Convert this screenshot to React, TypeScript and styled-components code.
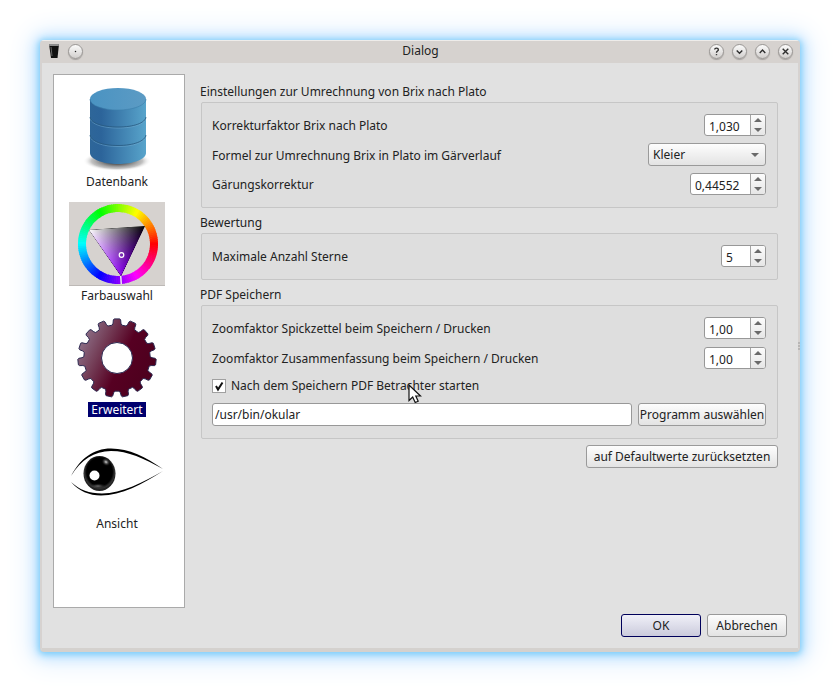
import React, { useState } from "react";
import styled, { createGlobalStyle, css } from "styled-components";

const GlobalStyle = createGlobalStyle`
  * { box-sizing: border-box; }
  body { margin: 0; background: #fff; }
  body, button, input, select {
    font-family: "Noto Sans", "Open Sans", sans-serif;
    font-size: 12px;
    color: #222;
  }
`;

const Page = styled.main`
  min-height: 100vh;
  padding: 40px;
  display: flex;
`;

const Window = styled.section`
  position: relative;
  flex: 1;
  display: flex;
  flex-direction: column;
  background: #e1e1e1;
  border: 2px solid #d6d2d0;
  border-top: 1px solid #eeecea;
  border-bottom: 4px solid #d4d1ce;
  border-radius: 4px;
  box-shadow: 0 1px 6px 1px #7accfa, 0 1px 14px 3px #b0dffd, 0 1px 28px 8px #dcecff;
`;

const TitleBar = styled.header`
  display: grid;
  grid-template-columns: 1fr auto 1fr;
  align-items: center;
  height: 22px;
  padding: 0 5px 2px 6px;
  background: #d6d2cf;
`;

const TitleSide = styled.div<{ $end?: boolean }>`
  display: flex;
  align-items: center;
  gap: 8px;
  justify-content: ${(p) => (p.$end ? "flex-end" : "flex-start")};
`;

const Title = styled.h1`
  margin: 0;
  font-size: 12px;
  font-weight: 400;
  line-height: 20px;
`;

const RoundButton = styled.button`
  display: flex;
  width: 15px;
  height: 15px;
  padding: 0;
  border: 1px solid #9a9795;
  border-radius: 50%;
  background: linear-gradient(#fbfbfb, #d2cfcd);
  box-shadow: 0 1px 1px #a5a19e;
  svg { display: block; width: 13px; height: 13px; }
`;

const Body = styled.div`
  flex: 1;
  display: flex;
  flex-direction: column;
  gap: 6px;
  padding: 11px;
`;

const Columns = styled.div`
  flex: 1;
  display: flex;
  gap: 15px;
`;

const Categories = styled.nav`
  flex: none;
  width: 132px;
  padding: 13px 15px;
  display: flex;
  flex-direction: column;
  gap: 13px;
  background: #fff;
  border: 1px solid #aaa;
`;

const Category = styled.button`
  display: flex;
  flex-direction: column;
  align-items: center;
  gap: 2px;
  width: 96px;
  padding: 0;
  border: 0;
  background: none;
`;

const CategoryIcon = styled.span<{ $hover?: boolean }>`
  display: block;
  height: 84px;
  ${(p) =>
    p.$hover &&
    css`
      background: #d6d2cf;
      box-shadow: inset 0 -1px #bdb9b6;
    `}
  svg { display: block; }
`;

const CategoryLabel = styled.span<{ $selected?: boolean }>`
  padding: 0 3px;
  line-height: 15px;
  ${(p) =>
    p.$selected &&
    css`
      background: #00006e;
      color: #fff;
    `}
`;

const Settings = styled.div`
  flex: 1;
  display: flex;
  flex-direction: column;
  gap: 6px;
  padding: 9px 9px 0 0;
`;

const Group = styled.section``;

const GroupTitle = styled.h2`
  margin: 0;
  padding-bottom: 1px;
  font-size: 12px;
  font-weight: 400;
  line-height: 18px;
`;

const GroupBox = styled.div<{ $gap?: number }>`
  display: flex;
  flex-direction: column;
  gap: ${(p) => p.$gap ?? 7}px;
  margin-left: 1px;
  padding: 11px 11px 12px 10px;
  border: 1px solid #c6c6c6;
  border-radius: 2px;
  background: #dedede;
`;

const Row = styled.div<{ $gap?: number }>`
  display: flex;
  align-items: center;
  justify-content: space-between;
  gap: ${(p) => p.$gap ?? 12}px;
`;

const FieldLabel = styled.label`
  padding-top: 2px;
  line-height: 20px;
`;

const SpinFrame = styled.div<{ $width: number }>`
  display: flex;
  width: ${(p) => p.$width}px;
  height: 22px;
  border: 1px solid #989898;
  border-radius: 3px;
  background: #fff;
  overflow: hidden;
`;

const SpinInput = styled.input`
  flex: 1;
  min-width: 0;
  padding: 2px 0 0 4px;
  border: 0;
  outline: 0;
  background: transparent;
`;

const SpinButtons = styled.div`
  display: flex;
  flex-direction: column;
  width: 15px;
  border-left: 1px solid #a4a4a4;
  background: linear-gradient(#fcfcfc, #e6e6e6);
`;

const SpinButton = styled.button`
  flex: 1;
  display: flex;
  align-items: center;
  justify-content: center;
  padding: 0;
  border: 0;
  background: none;
  svg { display: block; }
`;

const raised = css`
  height: 23px;
  border: 1px solid #9a9a9a;
  border-radius: 3px;
  background: linear-gradient(#fdfdfd, #e3e3e3);
`;

const SelectFrame = styled.div`
  ${raised}
  display: flex;
  align-items: center;
  width: 118px;
  padding-right: 6px;
`;

const Select = styled.select`
  flex: 1;
  height: 21px;
  padding: 0 4px;
  border: 0;
  outline: 0;
  appearance: none;
  background: transparent;
`;

const PushButton = styled.button<{ $default?: boolean; $width?: number }>`
  ${raised}
  flex: none;
  padding: 0;
  line-height: 20px;
  white-space: nowrap;
  width: ${(p) => (p.$width ? `${p.$width}px` : "auto")};
  ${(p) =>
    p.$default &&
    css`
      border-color: #00005a;
      background: linear-gradient(#f0f0f8, #cbcbdc);
    `}
`;

const CheckRow = styled.div`
  position: relative;
  display: flex;
  align-items: center;
  gap: 5px;
  height: 18px;
`;

const CheckLabel = styled.label`
  line-height: 18px;
`;

const CheckBox = styled.input`
  appearance: none;
  width: 14px;
  height: 14px;
  margin: 0;
  border: 1px solid #a0a0a0;
  background: #fff;
`;

const CheckHolder = styled.span`
  display: grid;
  > * { grid-area: 1 / 1; }
  svg { pointer-events: none; z-index: 1; }
`;

const Pointer = styled.svg`
  position: absolute;
  left: 196px;
  top: 7px;
  pointer-events: none;
`;

const PathInput = styled.input`
  flex: 1;
  min-width: 0;
  height: 23px;
  padding: 0 2px;
  border: 1px solid #989898;
  border-radius: 3px;
  outline: 0;
  background: #fff;
`;

const EndRow = styled.div`
  display: flex;
  justify-content: flex-end;
  gap: 6px;
`;

const Grip = styled.svg`
  position: absolute;
  right: -2px;
  top: 301px;
`;

const DatabaseIcon = () => (
  <svg width="96" height="84" viewBox="0 0 96 84" aria-hidden="true">
    <defs>
      <linearGradient id="db-side">
        <stop offset="0" stopColor="#2e6699" />
        <stop offset="0.2" stopColor="#2c649a" />
        <stop offset="1" stopColor="#58a4cb" />
      </linearGradient>
      <linearGradient id="db-top">
        <stop offset="0" stopColor="#4a93c2" />
        <stop offset="1" stopColor="#5c9bc4" />
      </linearGradient>
      <radialGradient id="db-shadow">
        <stop offset="0.3" stopColor="#555" />
        <stop offset="0.75" stopColor="#999" stopOpacity="0.6" />
        <stop offset="1" stopColor="#fff" stopOpacity="0" />
      </radialGradient>
    </defs>
    <ellipse cx="48" cy="73" rx="34" ry="10" fill="url(#db-shadow)" />
    <path d="M21 11V65C21 71 33 76 49 76S77 71 77 65V11Z" fill="url(#db-side)" />
    <g fill="none" strokeWidth="0.8">
      <path d="M21 30C22 36 33 40 49 40S76 36 77 30M21 48C22 54 33 58.500 49 58.500S76 54 77 48" stroke="#75add0" opacity="0.6" />
      <path d="M21 29C22 35 33 39 49 39S76 35 77 29M21 47C22 53 33 57.500 49 57.500S76 53 77 47" stroke="#28597f" />
    </g>
    <ellipse cx="49" cy="11" rx="28" ry="11" fill="url(#db-top)" />
    <path d="M21 11C21 17 33 22 49 22S77 17 77 11" fill="none" stroke="#3b7da9" strokeWidth="0.6" />
  </svg>
);

const wheelPoint = (deg: number, r: number) => {
  const a = (deg * Math.PI) / 180;
  return `${(49 + r * Math.cos(a)).toFixed(2)} ${(42 - r * Math.sin(a)).toFixed(2)}`;
};

const wheelSegments = Array.from({ length: 120 }, (_, i) => i * 3);

const ColorWheelIcon = () => (
  <svg width="96" height="84" viewBox="0 0 96 84" aria-hidden="true">
    <defs>
      <linearGradient id="tri-white" gradientUnits="userSpaceOnUse" x1="64" y1="49" x2="20" y2="28">
        <stop offset="0" stopColor="#fff" stopOpacity="0" />
        <stop offset="1" stopColor="#fff" />
      </linearGradient>
      <linearGradient id="tri-hue" gradientUnits="userSpaceOnUse" x1="48.600" y1="26" x2="52" y2="74">
        <stop offset="0" stopColor="#8a00f0" stopOpacity="0" />
        <stop offset="1" stopColor="#8a00f0" />
      </linearGradient>
    </defs>
    {wheelSegments.map((d) => (
      <path
        key={d}
        d={`M${wheelPoint(d, 36)}A36 36 0 0 0 ${wheelPoint(d + 4, 36)}`}
        fill="none"
        stroke={`hsl(${d + 2} 100% 50%)`}
        strokeWidth="8"
      />
    ))}
    <path d="M51.700 74L52.300 82" stroke="#eee" strokeWidth="1.500" />
    <g style={{ isolation: "isolate" }}>
      <path d="M20 28L76 24L52 74Z" fill="#000" />
      <path d="M20 28L76 24L52 74Z" fill="url(#tri-white)" style={{ mixBlendMode: "plus-lighter" }} />
      <path d="M20 28L76 24L52 74Z" fill="url(#tri-hue)" style={{ mixBlendMode: "plus-lighter" }} />
    </g>
    <circle cx="52.500" cy="53" r="2.300" fill="none" stroke="#fff" strokeWidth="1.200" />
  </svg>
);

const TEETH = 15;
const gearPath = (() => {
  const step = (2 * Math.PI) / TEETH;
  const shape: [number, number][] = [
    [-0.34, 33.2],
    [-0.27, 35],
    [-0.23, 38.2],
    [-0.17, 39.2],
    [0.17, 39.2],
    [0.23, 38.2],
    [0.27, 35],
    [0.34, 33.2],
  ];
  const pts: string[] = [];
  for (let i = 0; i < TEETH; i++) {
    for (const [o, r] of shape) {
      const a = (i + o) * step - Math.PI / 2;
      pts.push(`${(48 + r * Math.cos(a)).toFixed(2)} ${(42 + r * Math.sin(a)).toFixed(2)}`);
    }
  }
  return `M${pts.join("L")}ZM63.500 42A15.500 15.500 0 1 0 32.500 42A15.500 15.500 0 1 0 63.500 42Z`;
})();

const GearIcon = () => (
  <svg width="96" height="84" viewBox="0 0 96 84" aria-hidden="true">
    <defs>
      <linearGradient id="gear-fill" x1="0.080" y1="0.250" x2="0.920" y2="0.650">
        <stop offset="0" stopColor="#8a6a82" />
        <stop offset="0.25" stopColor="#754059" />
        <stop offset="0.6" stopColor="#560022" />
        <stop offset="1" stopColor="#4e001e" />
      </linearGradient>
    </defs>
    <path d={gearPath} fill="url(#gear-fill)" fillRule="evenodd" stroke="#2b2850" strokeWidth="1" strokeLinejoin="round" />
  </svg>
);

const EyeIcon = () => (
  <svg width="96" height="84" viewBox="0 0 96 84" aria-hidden="true">
    <defs>
      <radialGradient id="eye-shine">
        <stop offset="0" stopColor="#ddd" />
        <stop offset="1" stopColor="#000" stopOpacity="0" />
      </radialGradient>
      <radialGradient id="eye-ball" cx="0.500" cy="0.450">
        <stop offset="0.8" stopColor="#000" />
        <stop offset="0.95" stopColor="#333" />
        <stop offset="1" stopColor="#222" />
      </radialGradient>
    </defs>
    <path d="M2 46C11 29 24 18.500 42 18.500C60 18.500 77 27 94 39C75 28.500 59 21 42 21C25 21 12 30 2 46Z" />
    <path d="M2 52C10 61 20 65.500 32 65.500C52 65.500 74 54 94 41C74 52 53 63.500 33 63.500C20 63.500 11 60 2 52Z" />
    <ellipse cx="30.500" cy="43.500" rx="16" ry="17.500" fill="url(#eye-ball)" />
    <ellipse cx="37" cy="32" rx="5" ry="4" fill="url(#eye-shine)" transform="rotate(35 37 32)" />
    <ellipse cx="29" cy="56" rx="9" ry="3" fill="url(#eye-shine)" opacity="0.5" />
    <circle cx="25.500" cy="45.500" r="5" fill="#fff" />
  </svg>
);

const GlassIcon = () => (
  <svg width="12" height="16" viewBox="0 0 12 16" aria-hidden="true">
    <path d="M1 1H11L9.500 15H3Z" fill="#111" />
    <path d="M1 1H11L10.800 3H1.200Z" fill="#8d8d8d" />
    <path d="M3 4L4 13" stroke="#666" />
  </svg>
);

const glyphs = {
  menu: <circle cx="7" cy="7" r="0.8" fill="#222" stroke="none" />,
  help: (
    <>
      <path d="M5 4.800C5.200 2.800 9 2.900 9 5C9 6.500 7 6.500 7 8.300" />
      <path d="M7 9.800V11" />
    </>
  ),
  down: <path d="M4 6L7 9L10 6" />,
  up: <path d="M4 8.500L7 5.500L10 8.500" />,
  close: <path d="M4 4L10 10M10 4L4 10" />,
};

const WindowButton = ({ kind, label }: { kind: keyof typeof glyphs; label: string }) => (
  <RoundButton type="button" aria-label={label}>
    <svg viewBox="0 0 14 14" fill="none" stroke="#2e2e2e" strokeWidth="1.500">
      {glyphs[kind]}
    </svg>
  </RoundButton>
);

interface SpinProps {
  id: string;
  label: string;
  initial: string;
  width: number;
  step: number;
  digits: number;
}

const SpinRow = ({ id, label, initial, width, step, digits }: SpinProps) => {
  const [value, setValue] = useState(initial);
  const change = (dir: number) => {
    const n = parseFloat(value.replace(",", ".")) || 0;
    setValue((n + dir * step).toFixed(digits).replace(".", ","));
  };
  return (
    <Row>
      <FieldLabel htmlFor={id}>{label}</FieldLabel>
      <SpinFrame $width={width}>
        <SpinInput id={id} value={value} onChange={(e) => setValue(e.target.value)} />
        <SpinButtons>
          <SpinButton type="button" aria-label="Erhöhen" onClick={() => change(1)}>
            <svg width="8" height="4"><path d="M0 4L4 0L8 4Z" fill="#6a6a6a" /></svg>
          </SpinButton>
          <SpinButton type="button" aria-label="Verringern" onClick={() => change(-1)}>
            <svg width="8" height="4"><path d="M0 0L4 4L8 0Z" fill="#6a6a6a" /></svg>
          </SpinButton>
        </SpinButtons>
      </SpinFrame>
    </Row>
  );
};

const categories = [
  { name: "Datenbank", Icon: DatabaseIcon },
  { name: "Farbauswahl", Icon: ColorWheelIcon, hover: true },
  { name: "Erweitert", Icon: GearIcon, selected: true },
  { name: "Ansicht", Icon: EyeIcon },
];

export default function App() {
  const [openViewer, setOpenViewer] = useState(true);
  const [program, setProgram] = useState("/usr/bin/okular");
  return (
    <>
      <GlobalStyle />
      <Page>
        <Window>
          <TitleBar>
            <TitleSide>
              <GlassIcon />
              <WindowButton kind="menu" label="Fenstermenü" />
            </TitleSide>
            <Title>Dialog</Title>
            <TitleSide $end>
              <WindowButton kind="help" label="Hilfe" />
              <WindowButton kind="down" label="Minimieren" />
              <WindowButton kind="up" label="Maximieren" />
              <WindowButton kind="close" label="Schließen" />
            </TitleSide>
          </TitleBar>
          <Body>
            <Columns>
              <Categories>
                {categories.map(({ name, Icon, hover, selected }) => (
                  <Category key={name} type="button" aria-pressed={!!selected}>
                    <CategoryIcon $hover={hover}>
                      <Icon />
                    </CategoryIcon>
                    <CategoryLabel $selected={selected}>{name}</CategoryLabel>
                  </Category>
                ))}
              </Categories>
              <Settings>
                <Group>
                  <GroupTitle>Einstellungen zur Umrechnung von Brix nach Plato</GroupTitle>
                  <GroupBox>
                    <SpinRow id="brix" label="Korrekturfaktor Brix nach Plato" initial="1,030" width={62} step={0.01} digits={3} />
                    <Row>
                      <FieldLabel htmlFor="formula">Formel zur Umrechnung Brix in Plato im Gärverlauf</FieldLabel>
                      <SelectFrame>
                        <Select id="formula" defaultValue="Kleier">
                          <option>Kleier</option>
                        </Select>
                        <svg width="8" height="4" aria-hidden="true"><path d="M0 0L4 4L8 0Z" fill="#6a6a6a" /></svg>
                      </SelectFrame>
                    </Row>
                    <SpinRow id="fermentation" label="Gärungskorrektur" initial="0,44552" width={76} step={0.01} digits={5} />
                  </GroupBox>
                </Group>
                <Group>
                  <GroupTitle>Bewertung</GroupTitle>
                  <GroupBox>
                    <SpinRow id="stars" label="Maximale Anzahl Sterne" initial="5" width={45} step={1} digits={0} />
                  </GroupBox>
                </Group>
                <Group>
                  <GroupTitle>PDF Speichern</GroupTitle>
                  <GroupBox $gap={8}>
                    <SpinRow id="zoom-sheet" label="Zoomfaktor Spickzettel beim Speichern / Drucken" initial="1,00" width={62} step={0.1} digits={2} />
                    <SpinRow id="zoom-summary" label="Zoomfaktor Zusammenfassung beim Speichern / Drucken" initial="1,00" width={62} step={0.1} digits={2} />
                    <CheckRow>
                      <CheckHolder>
                        <CheckBox
                          id="viewer"
                          type="checkbox"
                          checked={openViewer}
                          onChange={(e) => setOpenViewer(e.target.checked)}
                        />
                        {openViewer && (
                          <svg width="14" height="14" viewBox="0 0 14 14" aria-hidden="true">
                            <path d="M4 7L6 10.500L10.500 3.500" fill="none" stroke="#111" strokeWidth="2" />
                          </svg>
                        )}
                      </CheckHolder>
                      <CheckLabel htmlFor="viewer">Nach dem Speichern PDF Betrachter starten</CheckLabel>
                      <Pointer width="15" height="20" viewBox="0 0 15 20" aria-hidden="true">
                        <path d="M1 1V16.500L4.700 13L7.200 18.500L10.200 17.200L7.800 12H12.500Z" fill="#fff" stroke="#111" strokeWidth="1.200" />
                      </Pointer>
                    </CheckRow>
                    <Row $gap={6}>
                      <PathInput aria-label="Programm" value={program} onChange={(e) => setProgram(e.target.value)} />
                      <PushButton type="button" $width={128}>Programm auswählen</PushButton>
                    </Row>
                  </GroupBox>
                </Group>
                <EndRow>
                  <PushButton type="button" $width={192}>auf Defaultwerte zurücksetzten</PushButton>
                </EndRow>
              </Settings>
            </Columns>
            <EndRow>
              <PushButton type="button" $default $width={80}>OK</PushButton>
              <PushButton type="button" $width={80}>Abbrechen</PushButton>
            </EndRow>
          </Body>
          <Grip width="3" height="9" aria-hidden="true">
            <path d="M1 1H3M1 4H3M1 7H3" stroke="#9a9a9a" />
          </Grip>
        </Window>
      </Page>
    </>
  );
}
